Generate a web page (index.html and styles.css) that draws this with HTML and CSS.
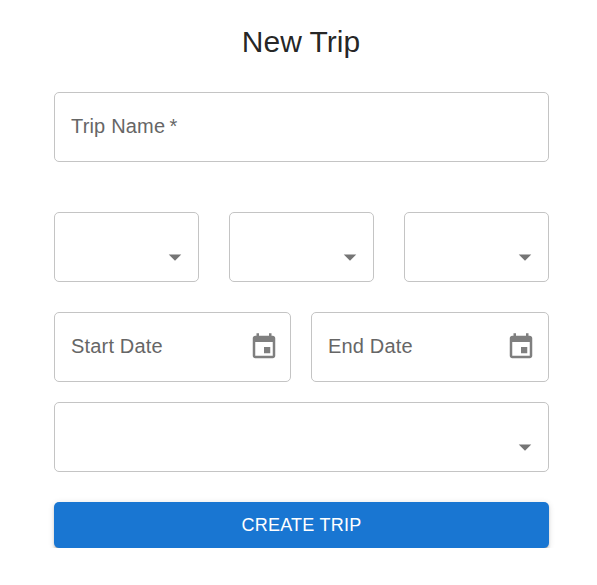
FILE: index.html
```html
<!DOCTYPE html>
<html lang="en">
<head>
<meta charset="utf-8">
<title>New Trip</title>
<link rel="stylesheet" href="styles.css">
</head>
<body>
<form class="form">
  <h1 class="title">New Trip</h1>
  <div class="field name"><span class="label">Trip Name&thinsp;*</span></div>
  <div class="row thirds">
    <div class="field select"><svg class="arrow" viewBox="0 0 24 24"><path d="M7 10l5 5 5-5z"/></svg></div>
    <div class="field select"><svg class="arrow" viewBox="0 0 24 24"><path d="M7 10l5 5 5-5z"/></svg></div>
    <div class="field select"><svg class="arrow" viewBox="0 0 24 24"><path d="M7 10l5 5 5-5z"/></svg></div>
  </div>
  <div class="row halves">
    <div class="field"><span class="label">Start Date</span><svg class="calendar" viewBox="0 0 24 24"><path d="M17 12h-5v5h5v-5zM16 1v2H8V1H6v2H5c-1.11 0-1.99.9-1.99 2L3 19c0 1.1.89 2 2 2h14c1.1 0 2-.9 2-2V5c0-1.1-.9-2-2-2h-1V1h-2zm3 18H5V8h14v11z"/></svg></div>
    <div class="field end"><span class="label">End Date</span><svg class="calendar" viewBox="0 0 24 24"><path d="M17 12h-5v5h5v-5zM16 1v2H8V1H6v2H5c-1.11 0-1.99.9-1.99 2L3 19c0 1.1.89 2 2 2h14c1.1 0 2-.9 2-2V5c0-1.1-.9-2-2-2h-1V1h-2zm3 18H5V8h14v11z"/></svg></div>
  </div>
  <div class="field select"><svg class="arrow" viewBox="0 0 24 24"><path d="M7 10l5 5 5-5z"/></svg></div>
  <button class="submit" type="button">CREATE TRIP</button>
</form>
</body>
</html>
```
FILE: styles.css
```css
* { box-sizing: border-box; }
body {
  margin: 0;
  background: #fff;
  font-family: "Liberation Sans", Arial, sans-serif;
}
.form {
  width: 495px;
  margin: 0 0 0 54px;
  padding-top: 22px;
}
.title {
  margin: 0 0 30px;
  padding-right: 1px;
  font-size: 30px;
  line-height: 40px;
  font-weight: 400;
  text-align: center;
  color: rgba(0, 0, 0, .87);
}
.field {
  display: flex;
  align-items: center;
  justify-content: space-between;
  height: 70px;
  padding: 0 11px 2px 16px;
  border: 1px solid #c4c4c4;
  border-radius: 5px;
}
.name { margin-bottom: 50px; }
.label {
  font-size: 20px;
  line-height: 28px;
  letter-spacing: .18px;
  color: #666;
  white-space: nowrap;
}
.row { display: grid; }
.thirds {
  grid-template-columns: repeat(3, 1fr);
  gap: 30px;
  margin-bottom: 30px;
}
.halves {
  grid-template-columns: 237px 238px;
  gap: 20px;
  margin-bottom: 20px;
}
.end { padding-right: 12px; }
.select {
  align-items: flex-end;
  justify-content: flex-end;
  padding: 0 8px 9px;
}
.arrow {
  width: 30px;
  height: 30px;
  fill: #757575;
}
.calendar {
  width: 30px;
  height: 30px;
  margin-top: 2px;
  fill: #7f7f7f;
}
.submit {
  display: block;
  width: 100%;
  height: 46px;
  margin-top: 30px;
  padding: 0;
  border: 0;
  border-radius: 5px;
  background: #1976d2;
  color: #fff;
  font: 400 18px/46px "Liberation Sans", Arial, sans-serif;
  letter-spacing: .25px;
  box-shadow: 0 3.75px 1.25px -2.5px rgba(0, 0, 0, .2), 0 2.5px 2.5px rgba(0, 0, 0, .14), 0 1.25px 6.25px rgba(0, 0, 0, .12);
}
```
